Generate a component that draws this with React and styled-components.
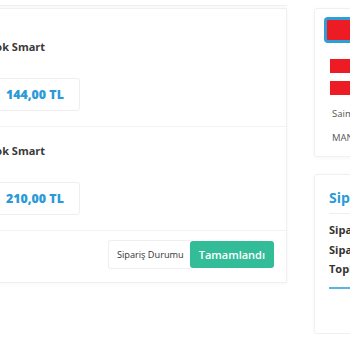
import React from "react";
import styled, { createGlobalStyle } from "styled-components";

const GlobalStyle = createGlobalStyle`
    body {
        margin: 0;
        background: #ffffff;
        font-family: "Open Sans", "Noto Sans", sans-serif;
        overflow: hidden;
    }
`;

const urunler = [
    { id: 1, ad: "Tok Smart", fiyat: "144,00 TL" },
    { id: 2, ad: "Tok Smart", fiyat: "210,00 TL" },
];

export default function App() {
    return (
        <>
            <GlobalStyle />
            <TopStrip />
            <Sayfa>
                <SolKart>
                    {urunler.map((urun) => (
                        <Urun key={urun.id}>
                            <UrunAdi>{urun.ad}</UrunAdi>
                            <Fiyat>{urun.fiyat}</Fiyat>
                        </Urun>
                    ))}
                    <DurumSatiri>
                        <DurumEtiket>Sipariş Durumu</DurumEtiket>
                        <DurumButon>Tamamlandı</DurumButon>
                    </DurumSatiri>
                </SolKart>

                <SagKolon>
                    <Kart>
                        <Sansur />
                        <SansurBar />
                        <SansurBar />
                        <GriYazi>Saime Yılmaz</GriYazi>
                        <GriYazi>MANAVGAT / ANTALYA</GriYazi>
                    </Kart>
                    <Kart ozet>
                        <OzetBaslik>Sipariş Özeti</OzetBaslik>
                        <OzetSatir>Sipariş No</OzetSatir>
                        <OzetSatir>Sipariş Tarihi</OzetSatir>
                        <OzetSatir>Toplam Tutar</OzetSatir>
                        <MaviCizgi />
                    </Kart>
                </SagKolon>
            </Sayfa>
        </>
    );
}

const TopStrip = styled.div`
    height: 5px;
    border-bottom: 1px solid #f1f1f1;
    margin-left: -40px;
    width: 327px;
    box-shadow: 0 1px 3px rgba(0, 0, 0, 0.03);
`;

const Sayfa = styled.div`
    display: flex;
    align-items: flex-start;
    gap: 27px;
    margin-left: -40px;
    margin-top: 2px;
`;

const SolKart = styled.div`
    flex: 0 0 auto;
    width: 327px;
    box-sizing: border-box;
    padding: 14px 12px 13px 28px;
    background: #fff;
    border: 1px solid #f0f0f0;
    box-shadow: 0 1px 4px rgba(0, 0, 0, 0.04);
`;

const Urun = styled.div`
    display: flex;
    flex-direction: column;
    align-items: flex-start;
    padding: 16px 0 15px;
    border-bottom: 1px solid #f3f3f3;
    margin-right: -12px;
`;

const UrunAdi = styled.div`
    font-size: 11px;
    line-height: 16px;
    font-weight: 700;
    color: #3a3a3a;
`;

const Fiyat = styled.div`
    margin-top: 23px;
    height: 33px;
    box-sizing: border-box;
    display: flex;
    align-items: center;
    padding: 0 15px 0 16px;
    border: 1px solid #eeeeee;
    border-radius: 3px;
    font-size: 12.4px;
    font-weight: 800;
    color: #2b9ad8;
`;

const DurumSatiri = styled.div`
    display: flex;
    justify-content: flex-end;
    margin-top: 9px;
`;

const DurumEtiket = styled.div`
    height: 29px;
    box-sizing: border-box;
    display: flex;
    align-items: center;
    padding: 0 6px 0 8px;
    border: 1px solid #efefef;
    border-right: none;
    border-radius: 3px 0 0 3px;
    font-size: 9.2px;
    color: #333;
`;

const DurumButon = styled.div`
    height: 27px;
    margin-top: 1px;
    display: flex;
    align-items: center;
    padding: 0 9px;
    background: #33bc98;
    border-radius: 3px;
    font-size: 11px;
    font-weight: 600;
    color: #fff;
`;

const SagKolon = styled.div`
    flex: 0 0 auto;
    width: 200px;
    display: flex;
    flex-direction: column;
    gap: 17px;
`;

const Kart = styled.div`
    box-sizing: border-box;
    height: ${(p) => (p.ozet ? "160px" : "149px")};
    padding: ${(p) => (p.ozet ? "13px 14px" : "8px 9px")};
    background: #fff;
    border: 1px solid #f0f0f0;
    border-radius: 3px;
    box-shadow: 0 1px 4px rgba(0, 0, 0, 0.04);
`;

const Sansur = styled.div`
    height: 26px;
    box-sizing: border-box;
    background: #ed1c24;
    border: 3px solid #2c9fd9;
    border-radius: 4px;
`;

const SansurBar = styled.div`
    height: 14px;
    margin: 16px 0 0 6px;
    background: #ed1c24;

    & + & {
        margin-top: 8px;
    }
`;

const GriYazi = styled.div`
    margin: 12px 0 0 8px;
    font-size: 9.5px;
    line-height: 13px;
    color: #555;
    white-space: nowrap;

    & + & {
        margin-top: 11px;
    }
`;

const OzetBaslik = styled.div`
    font-size: 14px;
    line-height: 19px;
    font-weight: 700;
    color: #2b9ad8;
    padding-bottom: 6px;
    border-bottom: 1px solid #eeeeee;
    margin-bottom: 6px;
`;

const OzetSatir = styled.div`
    font-size: 11px;
    line-height: 19.5px;
    font-weight: 700;
    color: #333;
`;

const MaviCizgi = styled.div`
    margin-top: 8px;
    height: 2px;
    background: #5fb2e0;
`;
